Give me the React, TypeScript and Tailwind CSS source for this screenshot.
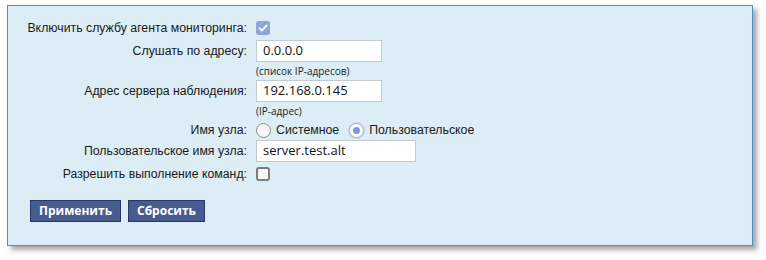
import React from "react";

const label = "text-right text-[12.3px] text-[#1a1a1a] pr-[9px] w-[248px] shrink-0";
const font = { fontFamily: '"Liberation Sans", Arial, sans-serif' };

function Row({ h, text, children }: { h: string; text?: string; children?: React.ReactNode }) {
  return (
    <div className={`flex items-center ${h}`}>
      <div className={label}>{text}</div>
      <div className="flex items-center">{children}</div>
    </div>
  );
}

function TextInput({ value, w }: { value: string; w: string }) {
  return (
    <div
      className={`${w} h-[22px] bg-white border border-[#c3cbd0] flex items-center px-[6px] text-[13px] text-[#111]`}
      style={{ fontFamily: '"Open Sans", "Noto Sans", sans-serif' }}
    >
      {value}
    </div>
  );
}

function Hint({ text }: { text: string }) {
  return (
    <div className="flex items-center h-[18px]">
      <div className="w-[248px] shrink-0" />
      <div className="text-[10px] text-[#222]" style={{ fontFamily: '"Open Sans", "Noto Sans", sans-serif' }}>
        {text}
      </div>
    </div>
  );
}

function Radio({ checked }: { checked?: boolean }) {
  return checked ? (
    <span className="w-[15px] h-[15px] rounded-full border border-[#9fb0d8] bg-white flex items-center justify-center shadow-[0_0_0_1px_#c9d3ee]">
      <span className="w-[7px] h-[7px] rounded-full bg-[#7f97d1]" />
    </span>
  ) : (
    <span className="w-[15px] h-[15px] rounded-full border border-[#8a8a8a] bg-[#f7f7f7]" />
  );
}

export default function App() {
  return (
    <div className="w-[766px] h-[260px] bg-white pt-[5px] pl-[7px]" style={font}>
      <div className="w-[746px] h-[241px] bg-[#dcedf5] border border-[#4a94c4] shadow-[4px_4px_5px_rgba(0,0,0,0.35)]">
        <div className="pt-[12px]">
          <Row h="h-[20px]" text="Включить службу агента мониторинга:">
            <span className="w-[14px] h-[14px] rounded-[3px] bg-[#8fa5dc] flex items-center justify-center">
              <svg width="10" height="10" viewBox="0 0 10 10">
                <path d="M1.5 5.2 L4 7.6 L8.6 2.4" stroke="white" strokeWidth="1.8" fill="none" strokeLinecap="round" strokeLinejoin="round" />
              </svg>
            </span>
          </Row>
          <div className="h-[2px]" />
          <Row h="h-[22px]" text="Слушать по адресу:">
            <TextInput value="0.0.0.0" w="w-[126px]" />
          </Row>
          <Hint text="(список IP-адресов)" />
          <Row h="h-[22px]" text="Адрес сервера наблюдения:">
            <TextInput value="192.168.0.145" w="w-[126px]" />
          </Row>
          <Hint text="(IP-адрес)" />
          <Row h="h-[20px]" text="Имя узла:">
            <div className="flex items-center gap-[5px] text-[12.3px] text-[#1a1a1a]">
              <Radio />
              <span className="mr-[5px]">Системное</span>
              <Radio checked />
              <span>Пользовательское</span>
            </div>
          </Row>
          <Row h="h-[22px]" text="Пользовательское имя узла:">
            <TextInput value="server.test.alt" w="w-[160px]" />
          </Row>
          <Row h="h-[24px]" text="Разрешить выполнение команд:">
            <span className="w-[14px] h-[14px] rounded-[3px] border-2 border-[#7c7c7c] bg-[#f7f7f7]" />
          </Row>
          <div className="flex gap-[7px] pl-[22px] mt-[14px]">
            <button
              className="h-[22px] px-[8px] bg-[#485b8f] border border-[#2b3866] text-white text-[12px] font-bold"
              style={{ fontFamily: '"Open Sans", "Noto Sans", sans-serif' }}
            >
              Применить
            </button>
            <button
              className="h-[22px] px-[8px] bg-[#485b8f] border border-[#2b3866] text-white text-[12px] font-bold"
              style={{ fontFamily: '"Open Sans", "Noto Sans", sans-serif' }}
            >
              Сбросить
            </button>
          </div>
        </div>
      </div>
    </div>
  );
}
